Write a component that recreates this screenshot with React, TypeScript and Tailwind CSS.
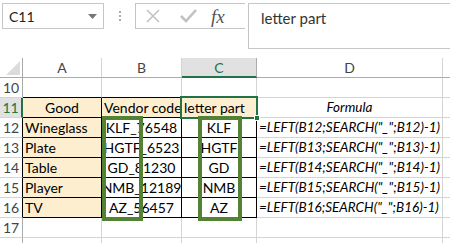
const font = { fontFamily: "Lato, 'Liberation Sans', sans-serif" };

type Cell = { text?: string; align?: "left" | "center"; italic?: boolean; fill?: boolean };

const rows: { n: number; cells: Cell[] }[] = [
  { n: 10, cells: [{}, {}, {}, {}] },
  {
    n: 11,
    cells: [
      { text: "Good", align: "center", fill: true },
      { text: "Vendor code", align: "left", fill: true },
      { text: "letter part", align: "left", fill: true },
      { text: "Formula", align: "center", italic: true },
    ],
  },
  ...[
    ["Wineglass", "KLF_76548", "KLF", 12],
    ["Plate", "HGTF_6523", "HGTF", 13],
    ["Table", "GD_81230", "GD", 14],
    ["Player", "NMB_12189", "NMB", 15],
    ["TV", "AZ_56457", "AZ", 16],
  ].map(([a, b, c, n]) => ({
    n: n as number,
    cells: [
      { text: a as string, align: "left" as const, fill: true },
      { text: b as string, align: "center" as const },
      { text: c as string, align: "center" as const },
      { text: `=LEFT(B${n};SEARCH("_";B${n})-1)`, align: "left" as const, italic: true },
    ],
  })),
  { n: 17, cells: [{}, {}, {}, {}] },
  { n: 18, cells: [{}, {}, {}, {}] },
];

const colW = ["w-[79px]", "w-[80px]", "w-[75px]", "w-[186px]"];

function FormulaBar() {
  return (
    <div className="h-[58px] flex items-start pt-[3px] pl-[2px]">
      <div className="w-[102px] h-[26px] border border-[#c6c6c6] flex items-center justify-between pl-[6px] pr-[6px] text-[14px] text-[#222]">
        <span>C11</span>
        <svg width="9" height="5" viewBox="0 0 9 5">
          <path d="M0 0 L9 0 L4.5 5 Z" fill="#777" />
        </svg>
      </div>
      <div className="w-[31px] h-[26px] flex flex-col items-center justify-center gap-[2px]">
        <div className="w-[2px] h-[2px] bg-[#aaa]" />
        <div className="w-[2px] h-[2px] bg-[#aaa]" />
        <div className="w-[2px] h-[2px] bg-[#aaa]" />
      </div>
      <div className="w-[110px] h-[26px] border border-r-0 border-[#c6c6c6] flex items-center">
        <svg width="14" height="14" viewBox="0 0 14 14" className="ml-[10px]">
          <path d="M1 1 L13 13 M13 1 L1 13" stroke="#c2c2c2" strokeWidth="1.6" />
        </svg>
        <svg width="17" height="14" viewBox="0 0 17 14" className="ml-[20px]">
          <path d="M1 7 L6 12 L16 1" stroke="#c2c2c2" strokeWidth="2.6" fill="none" />
        </svg>
        <span
          className="ml-[14px] italic text-[19px] leading-none text-[#555]"
          style={{ fontFamily: "'Liberation Serif', serif" }}
        >
          fx
        </span>
      </div>
      <div className="w-[3px]" />
      <div className="flex-1 h-[46px] border border-r-0 border-[#c6c6c6] pl-[12px] pt-[3px] text-[15px] text-[#333]">
        letter part
      </div>
    </div>
  );
}

export default function App() {
  return (
    <div className="relative w-[450px] h-[243px] overflow-hidden bg-white text-black" style={font}>
      <FormulaBar />

      {/* column headers */}
      <div className="flex h-[20px] text-[14px] text-[#444]">
        <div className="w-[23px] h-full border-r border-b border-[#ababab] relative">
          <svg width="14" height="14" viewBox="0 0 14 14" className="absolute right-[2px] bottom-[2px]">
            <path d="M14 0 L14 14 L0 14 Z" fill="#dcdcdc" />
          </svg>
        </div>
        {["A", "B", "C", "D"].map((l, i) => (
          <div
            key={l}
            className={`${colW[i]} h-full flex items-center justify-center border-r ${
              l === "C"
                ? "bg-[#e1e1e1] text-[#217346] border-b-2 border-b-[#217346] border-r-[#ababab]"
                : "border-b border-[#ababab] border-r-[#d4d4d4]"
            }`}
          >
            {l}
          </div>
        ))}
        <div className="flex-1 h-full border-b border-[#ababab]" />
      </div>

      {/* rows */}
      {rows.map((r) => {
        const inTable = r.n >= 11 && r.n <= 16;
        const above = r.n === 10;
        return (
          <div key={r.n} className="flex h-[20px] text-[14px]">
            <div
              className={`w-[23px] h-full flex items-center justify-center border-b border-[#d4d4d4] text-[#444] ${
                r.n === 11
                  ? "bg-[#e1e1e1] text-[#217346] border-r-2 border-r-[#217346]"
                  : inTable
                  ? "border-r border-r-black"
                  : "border-r border-r-[#ababab]"
              }`}
            >
              {r.n < 18 ? r.n : ""}
            </div>
            {r.cells.map((c, i) => {
              const tableCol = i < 3;
              const black = inTable && tableCol;
              const bottom = black || (above && tableCol) ? "border-b-black" : "border-b-[#d4d4d4]";
              const right = black || (inTable && i === 2) ? "border-r-black" : "border-r-[#d4d4d4]";
              return (
                <div
                  key={i}
                  className={`${colW[i]} h-full border-r border-b ${bottom} ${right} ${
                    c.fill ? "bg-[#fdeed0]" : ""
                  } flex items-center overflow-visible whitespace-nowrap ${
                    c.align === "center" ? "justify-center" : "pl-[2px]"
                  } ${c.italic ? "italic text-[13.5px]" : ""}`}
                >
                  {c.text}
                </div>
              );
            })}
            <div className="flex-1 h-full border-b border-[#d4d4d4]" />
          </div>
        );
      })}

      {/* active cell C11 */}
      <div className="absolute left-[180px] top-[96px] w-[78px] h-[23px] border-2 border-[#217346]" />
      <div className="absolute left-[254px] top-[115px] w-[6px] h-[6px] bg-[#217346] border border-white" />

      {/* green outline shapes */}
      <div className="absolute left-[102px] top-[116px] w-[41px] h-[105px] border-4 border-[#548235]" />
      <div className="absolute left-[198px] top-[116px] w-[44px] h-[105px] border-4 border-[#548235]" />
    </div>
  );
}
